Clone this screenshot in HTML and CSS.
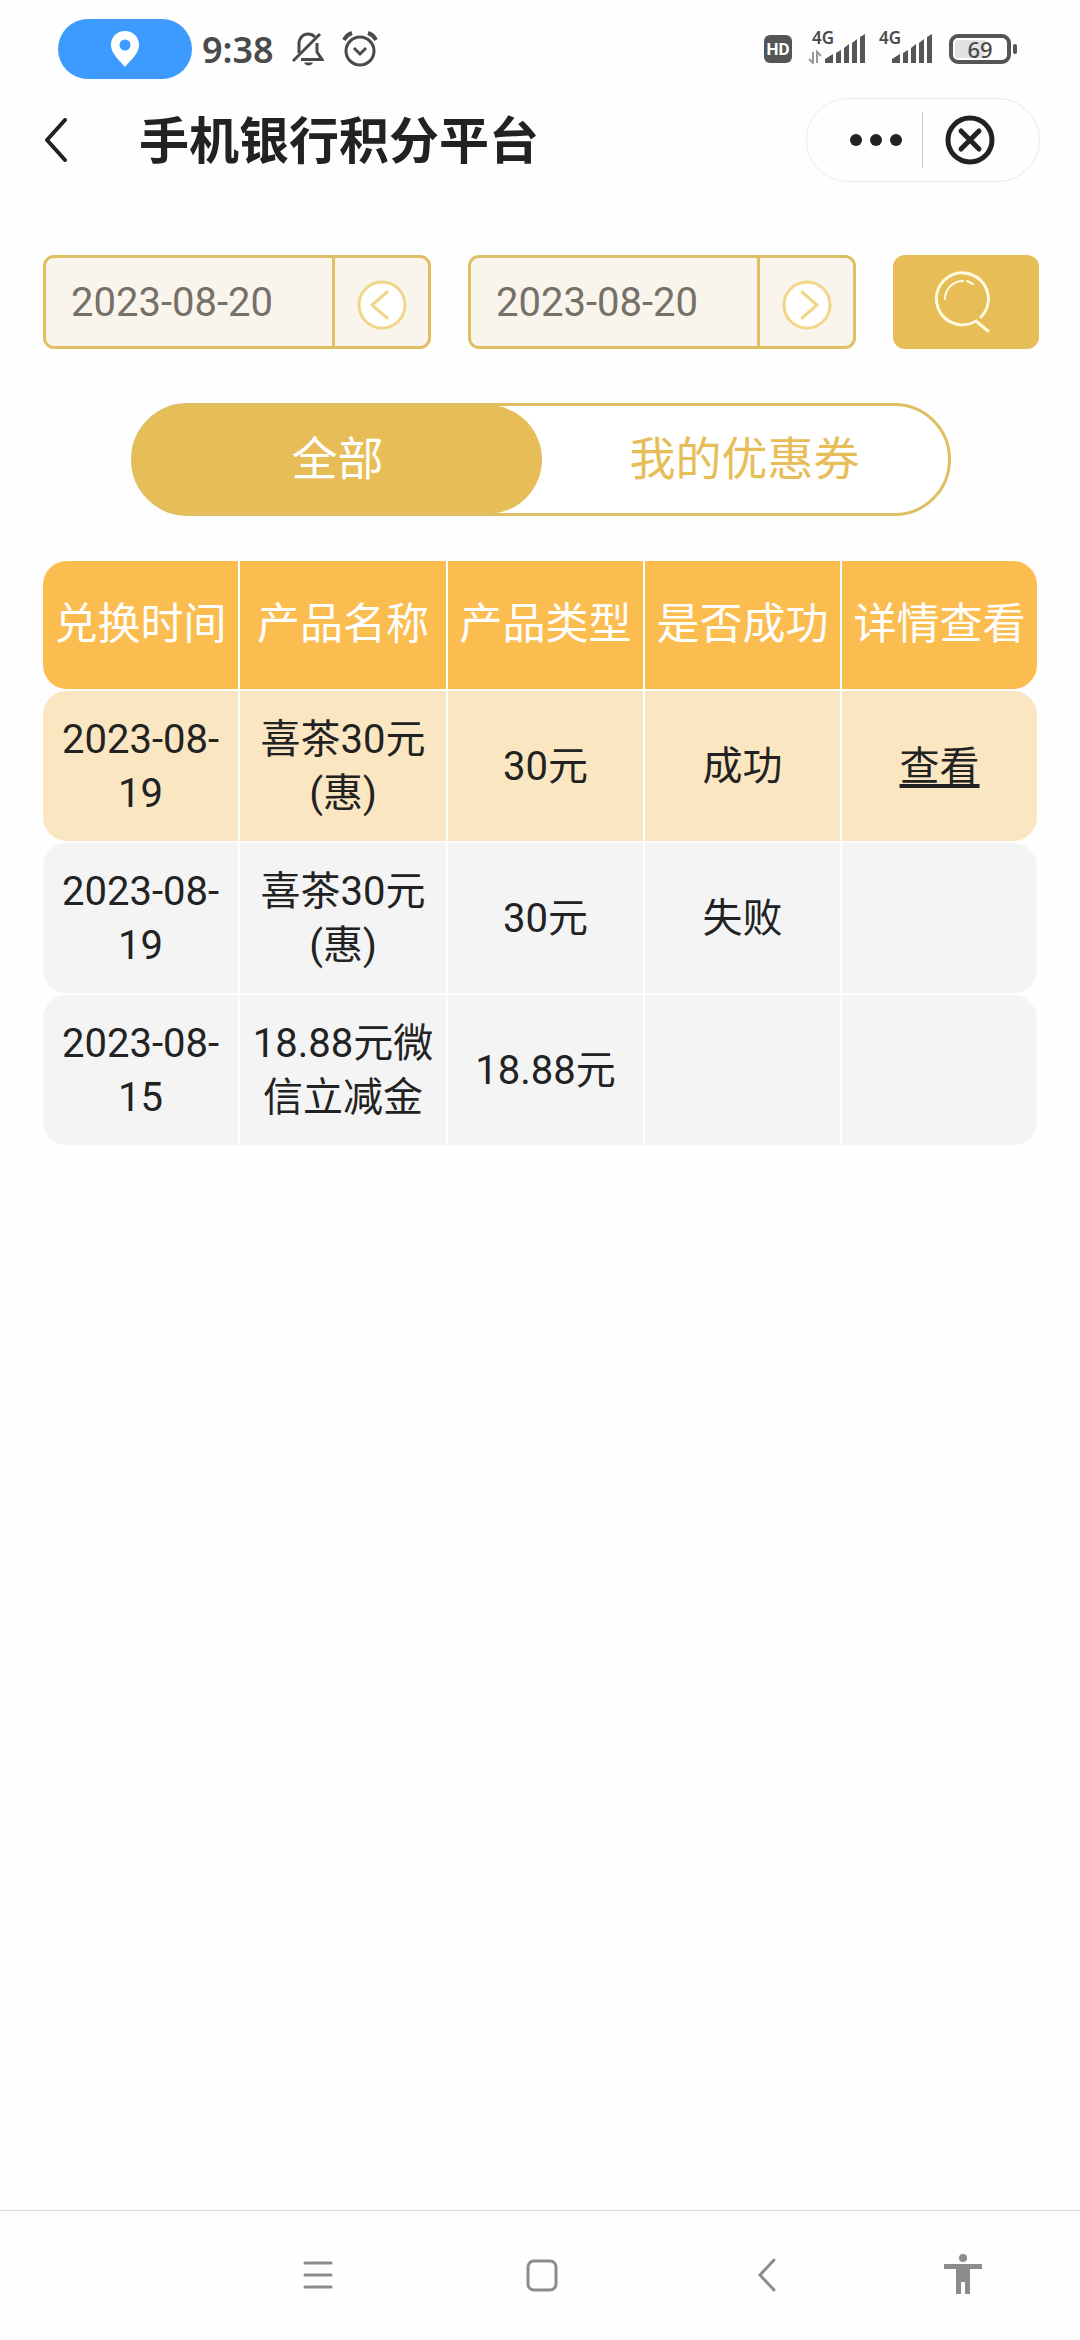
FILE: index.html
```
<!DOCTYPE html>
<html lang="zh-CN">
<head>
  <meta charset="UTF-8">
  <meta name="viewport" content="width=device-width, initial-scale=1.0">
  <title>手机银行积分平台</title>
  <link rel="stylesheet" href="styles.css">
</head>
<body>

  <!-- Status bar -->
  <div class="status-bar">
    <div class="status-left">
      <span class="location-pill">
        <svg width="28" height="36" viewBox="0 0 28 36"><path fill="#fff" fill-rule="evenodd" d="M14 0C6 0 0 6 0 14c0 8 7 14 14 22 7-8 14-14 14-22C28 6 22 0 14 0zm0 8.500a5.500 5.500 0 1 1 0 11 5.500 5.500 0 0 1 0-11z"/></svg>
      </span>
      <span class="time">9:38</span>
      <svg class="bell" width="32" height="34" viewBox="0 0 32 34" fill="none" stroke="#4a4a4a" stroke-width="3">
        <path d="M7 21V12C7 6 11 2 16 2c3 0 5 1 7 3M25 11v9l5 7.500H9"/>
        <path d="M1 29L28 2"/>
        <path d="M12 30.500h9c-1 2-2.500 3-4.500 3s-3.500-1-4.500-3z" fill="#4a4a4a" stroke="none"/>
      </svg>
      <svg width="36" height="36" viewBox="0 0 36 36" fill="none" stroke="#4a4a4a" stroke-width="3">
        <circle cx="18" cy="20" r="14"/>
        <path d="M12 17l6 6 6-6"/>
        <path d="M2 9c2-4 5-6 8-7M34 9c-2-4-5-6-8-7" stroke-width="4"/>
      </svg>
    </div>
    <div class="status-right">
      <span class="hd">HD</span>
      <span class="signal">
        <span class="net">4G</span>
        <svg width="58" height="30" viewBox="0 0 58 30" fill="#555">
          <path d="M17 25l8-5v9h-8zM28 19l5-3v13h-5zM36 14l5-4v19h-5zM44 9l5-4v24h-5zM52 3l5-3v29h-5z"/>
          <path d="M5 18v11l-4-4M9 29V18l4 4" fill="none" stroke="#999" stroke-width="2"/>
        </svg>
      </span>
      <span class="signal">
        <span class="net">4G</span>
        <svg width="58" height="30" viewBox="0 0 58 30" fill="#555">
          <path d="M17 25l8-5v9h-8zM28 19l5-3v13h-5zM36 14l5-4v19h-5zM44 9l5-4v24h-5zM52 3l5-3v29h-5z"/>
        </svg>
      </span>
      <span class="battery">69</span>
      <span class="battery-tip"></span>
    </div>
  </div>

  <!-- Title bar -->
  <header>
    <button class="back-btn" aria-label="返回">
      <svg width="24" height="44" viewBox="0 0 24 44" fill="none" stroke="#222" stroke-width="4" stroke-linecap="round" stroke-linejoin="round"><path d="M21 2L3 22l18 20"/></svg>
    </button>
    <h1>手机银行积分平台</h1>
    <div class="capsule">
      <button class="more-btn" aria-label="更多">
        <svg width="52" height="12" viewBox="0 0 52 12" fill="#222"><circle cx="6" cy="6" r="6"/><circle cx="26" cy="6" r="6"/><circle cx="46" cy="6" r="6"/></svg>
      </button>
      <button class="close-btn" aria-label="关闭">
        <svg width="50" height="50" viewBox="0 0 50 50" fill="none" stroke="#222" stroke-width="5" stroke-linecap="round"><circle cx="25" cy="25" r="22"/><path d="M16 16l18 18M34 16L16 34"/></svg>
      </button>
    </div>
  </header>

  <main>
    <!-- Date filter -->
    <form class="filter">
      <div class="date-field">
        <input type="text" value="2023-08-20" aria-label="开始日期">
        <button type="button" aria-label="选择开始日期">
          <svg width="50" height="50" viewBox="0 0 50 50" fill="none" stroke="#f2d589" stroke-width="3" stroke-linecap="round"><circle cx="25" cy="25" r="23" fill="#fff"/><path d="M30 12L15 25l15 13"/></svg>
        </button>
      </div>
      <div class="date-field">
        <input type="text" value="2023-08-20" aria-label="结束日期">
        <button type="button" aria-label="选择结束日期">
          <svg width="50" height="50" viewBox="0 0 50 50" fill="none" stroke="#f2d589" stroke-width="3" stroke-linecap="round"><circle cx="25" cy="25" r="23" fill="#fff"/><path d="M20 12l15 13-15 13"/></svg>
        </button>
      </div>
      <button type="button" class="search-btn" aria-label="查询">
        <svg width="62" height="62" viewBox="0 0 62 62" fill="none" stroke="#fffbe0" stroke-width="3" stroke-linecap="round">
          <path d="M46 46A26 26 0 1 0 41 50L53 60"/>
          <path d="M10 28C10 18 18 10 28 10M32 10l6 3" stroke-width="2"/>
        </svg>
      </button>
    </form>

    <div class="tabs">
      <button class="tab active">全部</button>
      <button class="tab">我的优惠券</button>
    </div>

    <!-- Exchange records -->
    <table class="records">
      <thead>
        <tr>
          <th>兑换时间</th>
          <th class="name">产品名称</th>
          <th>产品类型</th>
          <th>是否成功</th>
          <th>详情查看</th>
        </tr>
      </thead>
      <tbody>
        <tr class="success">
          <td>2023-08-19</td>
          <td>喜茶30元(惠)</td>
          <td>30元</td>
          <td>成功</td>
          <td><a href="#">查看</a></td>
        </tr>
        <tr>
          <td>2023-08-19</td>
          <td>喜茶30元(惠)</td>
          <td>30元</td>
          <td>失败</td>
          <td></td>
        </tr>
        <tr>
          <td>2023-08-15</td>
          <td>18.88元微信立减金</td>
          <td>18.88元</td>
          <td></td>
          <td></td>
        </tr>
      </tbody>
    </table>
  </main>

  <!-- System navigation -->
  <nav class="system-nav">
    <button aria-label="菜单">
      <svg width="30" height="40" viewBox="0 0 30 40" stroke="#8c8c8c" stroke-width="3" stroke-linecap="round"><path d="M2 8h26M2 20h26M2 32h26"/></svg>
    </button>
    <button aria-label="主页">
      <svg width="32" height="40" viewBox="0 0 32 40" fill="none" stroke="#8c8c8c" stroke-width="3"><rect x="2" y="6" width="28" height="29" rx="6"/></svg>
    </button>
    <button aria-label="返回">
      <svg width="18" height="40" viewBox="0 0 18 40" fill="none" stroke="#8c8c8c" stroke-width="3" stroke-linecap="round"><path d="M16 5L2 20l14 15"/></svg>
    </button>
    <button aria-label="无障碍">
      <svg width="38" height="46" viewBox="0 0 38 46" fill="#8c8c8c"><circle cx="19" cy="6" r="4"/><path d="M0 12h38v5H26v25h-5V30h-4v12h-5V17H0z"/></svg>
    </button>
  </nav>

</body>
</html>
```
FILE: styles.css
```
* {
  box-sizing: border-box;
}

body {
  font-family: Roboto, "Noto Sans CJK SC", sans-serif;
  margin: 0;
  min-height: 100vh;
  display: flex;
  flex-direction: column;
  background-color: #fefefe;
  color: #222;
}

button {
  font-family: inherit;
  padding: 0;
  border: none;
  background: none;
  color: inherit;
  cursor: pointer;
}

svg {
  display: block;
  flex-shrink: 0;
}

.status-bar {
  display: flex;
  justify-content: space-between;
  padding: 19px 63px 0 58px;
  color: #4a4a4a;
}

.status-left,
.status-right {
  display: flex;
  align-items: center;
  height: 60px;
}

.location-pill {
  display: flex;
  align-items: center;
  justify-content: center;
  width: 134px;
  height: 60px;
  border-radius: 30px;
  background-color: #3d9bff;
}

.time {
  margin: 0 18px 0 10px;
  font-family: "Noto Sans", sans-serif;
  font-size: 36px;
  font-weight: 600;
}

.bell {
  margin-right: 18px;
}

.hd {
  width: 28px;
  height: 28px;
  margin-right: 16px;
  border-radius: 6px;
  background-color: #555;
  color: white;
  font-size: 17px;
  font-weight: bold;
  line-height: 28px;
  text-align: center;
}

.signal {
  position: relative;
  margin-right: 9px;
}

.signal .net {
  position: absolute;
  top: -4px;
  left: 4px;
  font-family: "Noto Sans", sans-serif;
  font-size: 17px;
  font-weight: 600;
  line-height: 16px;
}

.battery {
  width: 62px;
  height: 30px;
  margin-left: 7px;
  border: 4px solid #555;
  border-radius: 9px;
  background: linear-gradient(to right, #e2e2e2 60%, transparent 60%) content-box;
  padding: 2px;
  font-family: "Noto Sans", sans-serif;
  font-size: 22px;
  font-weight: 500;
  line-height: 18px;
  text-align: center;
}

.battery-tip {
  width: 4px;
  height: 10px;
  margin-left: 2px;
  border-radius: 2px;
  background-color: #555;
}

header {
  display: flex;
  align-items: center;
  padding: 19px 40px 0 44px;
}

h1 {
  flex: 1;
  margin: 0 0 0 71px;
  padding-top: 4px;
  font-size: 50px;
  font-weight: bold;
  line-height: 60px;
}

.capsule {
  display: flex;
  align-items: center;
  width: 234px;
  height: 84px;
  border: 1px solid #ebebeb;
  border-radius: 42px;
}

.more-btn,
.close-btn {
  display: flex;
  align-items: center;
  height: 56px;
}

.more-btn {
  width: 116px;
  padding-right: 20px;
  justify-content: flex-end;
  border-right: 1px solid #ccc;
}

.close-btn {
  padding-left: 22px;
}

main {
  flex: 1;
  padding: 73px 41px 0 43px;
}

.filter {
  display: flex;
  gap: 37px;
}

.date-field {
  flex: 1;
  min-width: 0;
  display: flex;
  height: 94px;
  border: 3px solid #dfbf62;
  border-radius: 11px;
  background-color: #faf5ec;
}

.date-field input {
  flex: 1;
  min-width: 0;
  padding: 0 0 0 25px;
  border: none;
  background: none;
  font-family: inherit;
  font-size: 40px;
  color: #757068;
}

.date-field button {
  display: flex;
  align-items: center;
  justify-content: center;
  width: 96px;
  padding-top: 6px;
  border-left: 3px solid #dfbf62;
}

.search-btn {
  display: flex;
  align-items: center;
  justify-content: center;
  width: 146px;
  height: 94px;
  border-radius: 12px;
  background-color: #e6bd57;
}

.tabs {
  display: flex;
  max-width: 820px;
  height: 113px;
  margin: 54px auto 0;
  border: 3px solid #dfbf62;
  border-radius: 57px;
  background-color: white;
}

.tab {
  flex: 1;
  padding-bottom: 10px;
  border-radius: 54px;
  font-size: 46px;
  color: #e6bd57;
}

.tab.active {
  background-color: #e6bd57;
  color: white;
  box-shadow: 0 0 0 1px #e6bd57;
}

.records {
  width: calc(100% + 2px);
  margin: 43px 0 0 -2px;
  table-layout: fixed;
  border-spacing: 2px;
  text-align: center;
}

.records th {
  height: 128px;
  padding: 0 0 10px;
  background-color: #fbbd50;
  color: white;
  font-size: 43px;
  font-weight: normal;
  white-space: nowrap;
}

.records .name {
  width: 206px;
}

.records td {
  height: 150px;
  padding: 2px 10px 0;
  background-color: #f4f4f4;
  font-size: 40px;
  line-height: 54px;
}

.records .success td {
  background-color: #fbe6c2;
}

.records tr > :first-child {
  border-radius: 24px 0 0 24px;
}

.records tr > :last-child {
  border-radius: 0 24px 24px 0;
}

.records a {
  color: inherit;
  text-decoration-thickness: 4px;
  text-decoration-skip-ink: none;
  text-underline-offset: 4px;
}

.system-nav {
  display: flex;
  height: 130px;
  padding: 0 3% 2px 19%;
  border-top: 1px solid #ddd;
}

.system-nav button {
  flex: 4;
  display: flex;
  align-items: center;
  justify-content: center;
}

.system-nav button:last-child {
  flex: 3;
}
```
